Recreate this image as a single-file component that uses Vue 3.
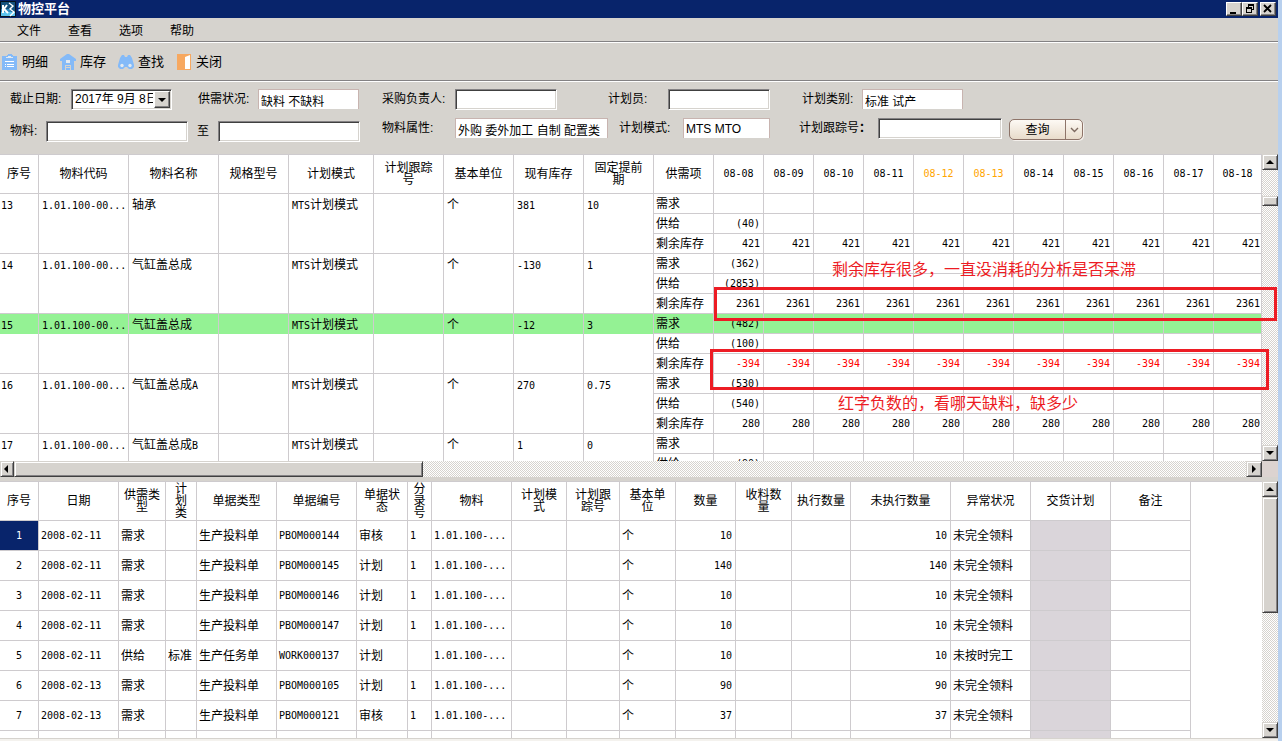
<script setup>
import { ref } from 'vue'

const menus = ['文件', '查看', '选项', '帮助']

const form = ref({
  date: '2017年 9月 8日',
  status: '缺料 不缺料',
  buyer: '',
  planner: '',
  category: '标准 试产',
  from: '',
  to: '',
  attribute: '外购 委外加工 自制 配置类',
  mode: 'MTS MTO',
  trace: '',
})

const planCols = [
  { t: '序号', w: 39 },
  { t: '物料代码', w: 90 },
  { t: '物料名称', w: 90 },
  { t: '规格型号', w: 70 },
  { t: '计划模式', w: 85 },
  { t: '计划跟踪\n号', w: 70 },
  { t: '基本单位', w: 70 },
  { t: '现有库存', w: 70 },
  { t: '固定提前\n期', w: 70 },
  { t: '供需项', w: 60 },
]
const days = ['08-08', '08-09', '08-10', '08-11', '08-12', '08-13', '08-14', '08-15', '08-16', '08-17', '08-18']
const weekend = ['08-12', '08-13']

const code = '1.01.100-00...'
const materials = [
  { no: '13', name: '轴承', stock: '381', lead: '10', need: '', supply: '(40)', left: '421' },
  { no: '14', name: '气缸盖总成', stock: '-130', lead: '1', need: '(362)', supply: '(2853)', left: '2361' },
  { no: '15', name: '气缸盖总成', stock: '-12', lead: '3', need: '(482)', supply: '(100)', left: '-394', active: true },
  { no: '16', name: '气缸盖总成A', stock: '270', lead: '0.75', need: '(530)', supply: '(540)', left: '280' },
  { no: '17', name: '气缸盖总成B', stock: '1', lead: '0', need: '', supply: '(90)', left: '' },
]
const lead = (m) => [m.no, code, m.name, '', 'MTS计划模式', '', '个', m.stock, m.lead]
const subRows = (m) => [
  { t: '需求', v: days.map((_, i) => (i ? '' : m.need)) },
  { t: '供给', v: days.map((_, i) => (i ? '' : m.supply)) },
  ...(m.left ? [{ t: '剩余库存', v: days.map(() => m.left) }] : []),
]

const billCols = [
  { t: '序号', w: 39 },
  { t: '日期', w: 80 },
  { t: '供需类\n型', w: 47 },
  { t: '计\n划\n类', w: 31 },
  { t: '单据类型', w: 80 },
  { t: '单据编号', w: 80 },
  { t: '单据状\n态', w: 51 },
  { t: '分\n录\n号', w: 24 },
  { t: '物料', w: 80 },
  { t: '计划模\n式', w: 55 },
  { t: '计划跟\n踪号', w: 53 },
  { t: '基本单\n位', w: 56 },
  { t: '数量', w: 60, right: true },
  { t: '收料数\n量', w: 56 },
  { t: '执行数量', w: 59 },
  { t: '未执行数量', w: 100, right: true },
  { t: '异常状况', w: 80 },
  { t: '交货计划', w: 80, shade: true },
  { t: '备注', w: 80 },
]
const bill = (no, date, kind, cls, type, num, state, entry, qty, issue) =>
  [no, date, kind, cls, type, num, state, entry, '1.01.100-...', '', '', '个', qty, '', '', qty, issue, '', '']
const bills = [
  bill('1', '2008-02-11', '需求', '', '生产投料单', 'PBOM000144', '审核', '1', '10', '未完全领料'),
  bill('2', '2008-02-11', '需求', '', '生产投料单', 'PBOM000145', '计划', '1', '140', '未完全领料'),
  bill('3', '2008-02-11', '需求', '', '生产投料单', 'PBOM000146', '计划', '1', '10', '未完全领料'),
  bill('4', '2008-02-11', '需求', '', '生产投料单', 'PBOM000147', '计划', '1', '10', '未完全领料'),
  bill('5', '2008-02-11', '供给', '标准', '生产任务单', 'WORK000137', '计划', '', '10', '未按时完工'),
  bill('6', '2008-02-13', '需求', '', '生产投料单', 'PBOM000105', '计划', '1', '90', '未完全领料'),
  bill('7', '2008-02-13', '需求', '', '生产投料单', 'PBOM000121', '审核', '1', '37', '未完全领料'),
  billCols.map(() => ''),
]

// Latin runs use the half-width face, everything else the CJK face.
const runs = (text) => (text.match(/[\x20-\x7e]+|[^\x20-\x7e]+/g) || []).map((t) => ({ t, half: t.charCodeAt(0) < 127 }))
</script>

<template>
  <div class="desktop">
    <div class="window">
      <header class="titlebar">
        <svg class="logo" viewBox="0 0 16 16" aria-hidden="true">
          <rect width="16" height="16" rx="1" fill="#06121f" />
          <rect x="1" y="1" width="14" height="14" fill="#14507c" />
          <path d="M1 11h14v4H1z" fill="#5cc3ee" />
          <path d="M1 8h8l3 3H1z" fill="#2c86bd" />
          <path d="M3 4v8M7 4L4 8l4 4" fill="none" stroke="#fff" stroke-width="2" />
          <path d="M9 2l4 3-3 3 4 3-4 4" fill="none" stroke="#fff" stroke-width="1.4" />
        </svg>
        <h1 class="title">物控平台</h1>
        <button class="sys" aria-label="最小化">
          <svg viewBox="0 0 14 12"><path d="M3 9h6v2H3z" /></svg>
        </button>
        <button class="sys" aria-label="还原">
          <svg viewBox="0 0 14 12"><path d="M5 1h6v6H9V6h1V3H6v1H5zM3 4h6v6H3zM4 6v3h4V6z" fill-rule="evenodd" /></svg>
        </button>
        <button class="sys close" aria-label="关闭窗口">
          <svg viewBox="0 0 14 12"><path d="M3 2l7 7M10 2l-7 7" fill="none" stroke="#000" stroke-width="1.8" /></svg>
        </button>
      </header>

      <nav class="menubar">
        <button v-for="m in menus" :key="m" class="menu">{{ m }}</button>
      </nav>

      <div class="toolbar">
        <button class="tool">
          <svg viewBox="0 0 16 16"><path d="M0 2h5V1h1V0h4v1h1v1h4v14H0z" fill="#84baf8" /><path d="M4 3h2V2h3v1h2v1H4z" fill="#e4eaf0" /><path d="M3 7h9v1H3zM3 10h1v1H3zM5 10h7v1H5zM3 12h1v1H3zM5 12h7v1H5z" fill="#fff" /></svg>
          明细
        </button>
        <button class="tool">
          <svg viewBox="0 0 16 16"><path d="M7 0h2l7 5v2h-2v9h-3v-5H5v5H2V7H0V5z" fill="#84baf8" /><path d="M6 6h4v3H6z" fill="#e4eaf0" /><path d="M6 12h4v1H6zM6 14h4v2H6z" fill="#84baf8" /></svg>
          库存
        </button>
        <button class="tool">
          <svg viewBox="0 0 16 16"><path d="M4 1h2l1 2h2l1-2h2l2 3 2 7v2l-2 2h-3l-2-2H7l-2 2H2l-2-2v-2l2-7z" fill="#84baf8" /><circle cx="4" cy="11.5" r="1.7" fill="#e4eaf0" /><circle cx="12" cy="11.5" r="1.7" fill="#e4eaf0" /></svg>
          查找
        </button>
        <button class="tool">
          <svg viewBox="0 0 16 16"><path d="M1 0h14v16H1z" fill="#f7a860" /><path d="M9 3l5-2v14H9z" fill="#fff" /></svg>
          关闭
        </button>
      </div>

      <form class="filters" @submit.prevent>
        <div class="group g1">
          <div class="line">
            <label for="date" class="l61">截止日期:</label>
            <span class="combo">
              <select id="date" v-model="form.date"><option>2017年 9月 8日</option></select>
              <i class="drop"><i class="tri down"></i></i>
            </span>
            <label for="status" class="l60 after">供需状况:</label>
            <input id="status" v-model="form.status" class="flat w101" />
          </div>
          <div class="line low">
            <label for="from" class="l36">物料:</label>
            <input id="from" v-model="form.from" class="sunk w142" />
            <label for="to" class="l30">至</label>
            <input id="to" v-model="form.to" class="sunk w142" />
          </div>
        </div>
        <div class="group g2">
          <div class="line">
            <label for="buyer" class="l72">采购负责人:</label>
            <input id="buyer" v-model="form.buyer" class="sunk w102" />
          </div>
          <div class="line">
            <label for="attr" class="l72">物料属性:</label>
            <input id="attr" v-model="form.attribute" class="flat w153" />
          </div>
        </div>
        <div class="group g3">
          <div class="line">
            <label for="planner" class="l60">计划员:</label>
            <input id="planner" v-model="form.planner" class="sunk w102" />
          </div>
          <div class="line">
            <label for="mode" class="l64">计划模式:</label>
            <input id="mode" v-model="form.mode" class="flat w87" />
          </div>
        </div>
        <div class="group g4">
          <div class="line inset">
            <label for="cat" class="l60">计划类别:</label>
            <input id="cat" v-model="form.category" class="flat w101" />
          </div>
          <div class="line">
            <label for="trace" class="l79">计划跟踪号<b>：</b></label>
            <input id="trace" v-model="form.trace" class="sunk w124" />
            <span class="split">
              <button class="query">查询</button>
              <button class="more" aria-label="更多查询">
                <svg viewBox="0 0 9 6"><path d="M1 1l3.5 3.5L8 1" fill="none" stroke="#7d6a60" stroke-width="1.4" /></svg>
              </button>
            </span>
          </div>
        </div>
      </form>

      <section class="pane plan">
        <div class="view">
          <div class="clip">
            <table class="grid">
              <colgroup>
                <col v-for="c in planCols" :key="c.t" :style="{ width: c.w + 'px' }" />
                <col v-for="d in days.slice(1)" :key="d" class="day" />
                <col />
              </colgroup>
              <thead>
                <tr>
                  <th v-for="c in planCols" :key="c.t">{{ c.t }}</th>
                  <th v-for="d in days" :key="d" class="half" :class="{ weekend: weekend.includes(d) }">{{ d }}</th>
                </tr>
              </thead>
              <tbody v-for="m in materials" :key="m.no">
                <tr v-for="(s, i) in subRows(m)" :key="s.t" :class="{ active: m.active && i === 0 }">
                  <template v-if="i === 0">
                    <td v-for="(v, k) in lead(m)" :key="k" :rowspan="subRows(m).length" class="main" :class="{ first: k === 0 }">
                      <span v-for="(r, n) in runs(v)" :key="n" :class="{ half: r.half }">{{ r.t }}</span>
                    </td>
                  </template>
                  <td class="kind">{{ s.t }}</td>
                  <td v-for="(v, k) in s.v" :key="k" class="num half" :class="{ short: i === 2 && v.startsWith('-') }">{{ v }}</td>
                </tr>
              </tbody>
            </table>
          </div>
          <div class="vbar">
            <button class="arrow" aria-label="向上"><i class="tri up"></i></button>
            <i class="space s26"></i>
            <i class="thumb h10"></i>
            <i class="space grow"></i>
            <button class="arrow" aria-label="向下"><i class="tri down"></i></button>
          </div>
        </div>
        <div class="hrow">
          <div class="hbar">
            <button class="arrow cut" aria-label="向左"><i class="tri left"></i></button>
            <i class="thumb wide"></i>
            <i class="space grow"></i>
            <button class="arrow" aria-label="向右"><i class="tri right"></i></button>
          </div>
          <i class="corner"></i>
        </div>
        <div class="frame frame-a"></div>
        <div class="frame frame-b"></div>
        <p class="note note-a">剩余库存很多，一直没消耗的分析是否呆滞</p>
        <p class="note note-b">红字负数的，看哪天缺料，缺多少</p>
      </section>

      <section class="pane bills">
        <div class="view">
          <div class="clip">
            <table class="grid detail">
              <colgroup>
                <col v-for="c in billCols" :key="c.t" :style="{ width: c.w + 'px' }" />
              </colgroup>
              <thead>
                <tr><th v-for="c in billCols" :key="c.t">{{ c.t }}</th></tr>
              </thead>
              <tbody>
                <tr v-for="(b, i) in bills" :key="i">
                  <td v-for="(v, k) in b" :key="k" :class="{ num: billCols[k].right, shade: billCols[k].shade, index: k === 0, picked: k === 0 && i === 0 }">
                    <span v-for="(r, n) in runs(v)" :key="n" :class="{ half: r.half }">{{ r.t }}</span>
                  </td>
                </tr>
              </tbody>
            </table>
          </div>
          <div class="vbar">
            <button class="arrow" aria-label="向上"><i class="tri up"></i></button>
            <i class="thumb h116"></i>
            <i class="space grow"></i>
            <button class="arrow" aria-label="向下"><i class="tri down"></i></button>
          </div>
        </div>
      </section>
      <footer class="status"></footer>
    </div>
  </div>
</template>

<style>
body { margin: 0; }
</style>

<style scoped>
* { box-sizing: border-box; }
.desktop {
  height: 100vh;
  padding-right: 4px;
  background: #b8d0ee;
  font: 12px/14px "Liberation Sans", "Noto Sans CJK SC", sans-serif;
  color: #000;
  overflow: hidden;
}
.window { height: 100%; display: flex; flex-direction: column; background: #d6d3ce; }
button, input, select { font: inherit; color: inherit; margin: 0; border-radius: 0; }
button { padding: 0; border: 0; background: none; }

.titlebar { flex: none; height: 18px; display: flex; align-items: center; background: #08246b; padding-right: 2px; }
.logo { width: 16px; height: 16px; margin-right: 2px; }
.title { flex: 1; margin: 0; color: #fff; font-size: 13px; line-height: 16px; font-weight: bold; }
.sys {
  width: 16px; height: 14px; display: flex; background: #d6d3ce;
  border: 1px solid; border-color: #fff #404040 #404040 #fff; box-shadow: inset -1px -1px #848284;
}
.sys svg { width: 14px; height: 12px; }
.close { margin-left: 2px; }

.menubar { flex: none; height: 25px; display: flex; gap: 27px; padding-left: 17px; border-bottom: 1px solid #fff; box-shadow: inset 0 -1px #848284; }
.menu { height: 25px; }
.toolbar { flex: none; height: 39px; display: flex; align-items: center; gap: 12px; padding-left: 2px; border-bottom: 1px solid #fff; box-shadow: inset 0 -1px #848284; }
.tool { display: flex; align-items: center; gap: 4px; font-size: 13px; line-height: 16px; }
.tool svg { width: 16px; height: 16px; }

.filters { flex: none; height: 72px; display: flex; padding: 7px 0 0 10px; }
.group { display: flex; flex-direction: column; gap: 9px; }
.g1 { margin-right: 22px; width: 350px; }
.g2 { width: 226px; }
.g3 { width: 162px; align-items: flex-end; margin-right: 29px; }
.line { display: flex; align-items: flex-start; height: 20px; }
.line label { flex: none; padding-top: 3px; white-space: nowrap; }
.low { margin-top: 3px; }
.inset { padding-left: 3px; }
.after { margin-left: 26px; }
.l30 { width: 30px; padding-left: 9px; }
.l36 { width: 36px; }
.l60 { width: 60px; }
.l61 { width: 61px; }
.l64 { width: 64px; }
.l72 { width: 73px; }
.l79 { width: 79px; }
.w87 { width: 87px; }
.w101 { width: 101px; }
.w102 { width: 102px; }
.w124 { width: 124px; }
.w142 { width: 142px; }
.w153 { width: 153px; }
.sunk, .combo {
  height: 21px; background: #fff; border: 1px solid; border-color: #848284 #fff #fff #848284;
  box-shadow: inset 1px 1px #404040, inset -1px -1px #d6d3ce; padding: 2px 3px; outline: 0;
}
.flat { height: 20px; background: #fff; border: 1px solid #c8b4b0; border-bottom: 0; padding: 1px 2px 0; outline: 0; }
.combo { width: 101px; display: flex; padding: 2px; position: relative; }
.combo select { flex: 1; min-width: 0; height: 15px; appearance: none; border: 0; background: #fff; padding: 0 16px 0 1px; line-height: 15px; text-overflow: clip; outline: 0; }
.drop {
  position: absolute; right: 1px; top: 1px; width: 16px; height: 17px; display: flex; align-items: center; justify-content: center;
  background: #d6d3ce; border: 1px solid; border-color: #fff #404040 #404040 #fff; box-shadow: inset -1px -1px #848284; pointer-events: none;
}
.split { display: flex; width: 74px; height: 21px; margin: 1px 0 0 7px; border: 1px solid #8e7469; border-radius: 5px; box-shadow: 1px 1px #f4f0ec; background: linear-gradient(#fdf9f4, #e8dccb); }
.query { flex: 1; }
.more { width: 17px; border-left: 1px solid #8e7469; display: flex; align-items: center; justify-content: center; }
.more svg { width: 9px; height: 6px; }

.pane { min-height: 0; display: flex; flex-direction: column; position: relative; }
.plan { flex: 323 1 0; }
.bills { flex: 257 1 0; margin-top: 4px; }
.view { flex: 1; min-height: 0; display: flex; background: #fff; }
.clip { flex: 1; min-width: 0; overflow: hidden; border-top: 1px solid #cecbce; }
.grid { width: 100%; table-layout: fixed; border-collapse: separate; border-spacing: 0; line-height: 14px; }
.detail { width: 1191px; }
.day { width: 50px; }
.grid th, .grid td { padding: 0; border-right: 1px solid #cecbce; border-bottom: 1px solid #cecbce; font-weight: normal; white-space: nowrap; overflow: hidden; }
.grid th { height: 39px; line-height: 12px; white-space: pre; text-align: center; vertical-align: middle; }
.grid td { height: 20px; text-align: left; vertical-align: middle; }
.half { font-family: "DejaVu Sans Mono", monospace; font-size: 10px; }
.weekend { color: #ffa500; }
.grid .main { vertical-align: top; padding: 4px 0 0 3px; }
.grid .first { padding-left: 1px; }
.grid .kind { padding-left: 2px; }
.grid .num { text-align: right; padding-right: 3px; }
.plan .num:last-child { padding-right: 1px; }
.grid .short { color: #f00; }
.active td { background: #94f294; }
.active .main { background: linear-gradient(#94f294, #94f294) 0 0 / 100% 20px no-repeat #fff; }
.detail .half { line-height: 14px; }
.grid.detail td { height: 30px; padding-left: 2px; }
.grid.detail .index { text-align: center; padding: 0; }
.grid.detail .shade { background: #dad5da; }
.grid.detail .picked { background: #08246b; color: #fff; }

.vbar, .hbar { display: flex; background: repeating-conic-gradient(#d6d3ce 0 25%, #fff 0 50%) 0 0 / 2px 2px; }
.vbar { flex: none; width: 16px; flex-direction: column; }
.hrow { flex: none; height: 16px; display: flex; }
.hbar { flex: 1; }
.corner { width: 16px; background: #dcd3d0; }
.arrow, .thumb {
  flex: none; width: 16px; height: 16px; display: flex; align-items: center; justify-content: center; background: #d6d3ce;
  border: 1px solid; border-color: #d6d3ce #404040 #404040 #d6d3ce; box-shadow: inset 1px 1px #fff, inset -1px -1px #848284;
}
.cut { width: 14px; padding-right: 3px; }
.h10 { height: 10px; }
.h116 { height: 116px; }
.wide { width: 409px; }
.s26 { height: 26px; }
.grow { flex: 1; }
.tri { width: 0; height: 0; border: 4px solid transparent; }
.up { border-bottom-color: #000; border-top-width: 0; }
.down { border-top-color: #000; border-bottom-width: 0; }
.left { border-right-color: #000; border-left-width: 0; }
.right { border-left-color: #000; border-right-width: 0; }

.frame { position: absolute; border: 3px solid #ed1c24; pointer-events: none; }
.frame-a { left: 714px; right: 1px; top: 133px; height: 34px; }
.frame-b { left: 710px; right: 9px; top: 195px; height: 41px; }
.note { position: absolute; margin: 0; font-size: 16px; line-height: 20px; color: #ed1c24; white-space: nowrap; }
.note-a { left: 832px; top: 106px; }
.note-b { left: 838px; top: 240px; }
.status { flex: none; height: 3px; border-bottom: 2px solid #f4f2ee; }
</style>
